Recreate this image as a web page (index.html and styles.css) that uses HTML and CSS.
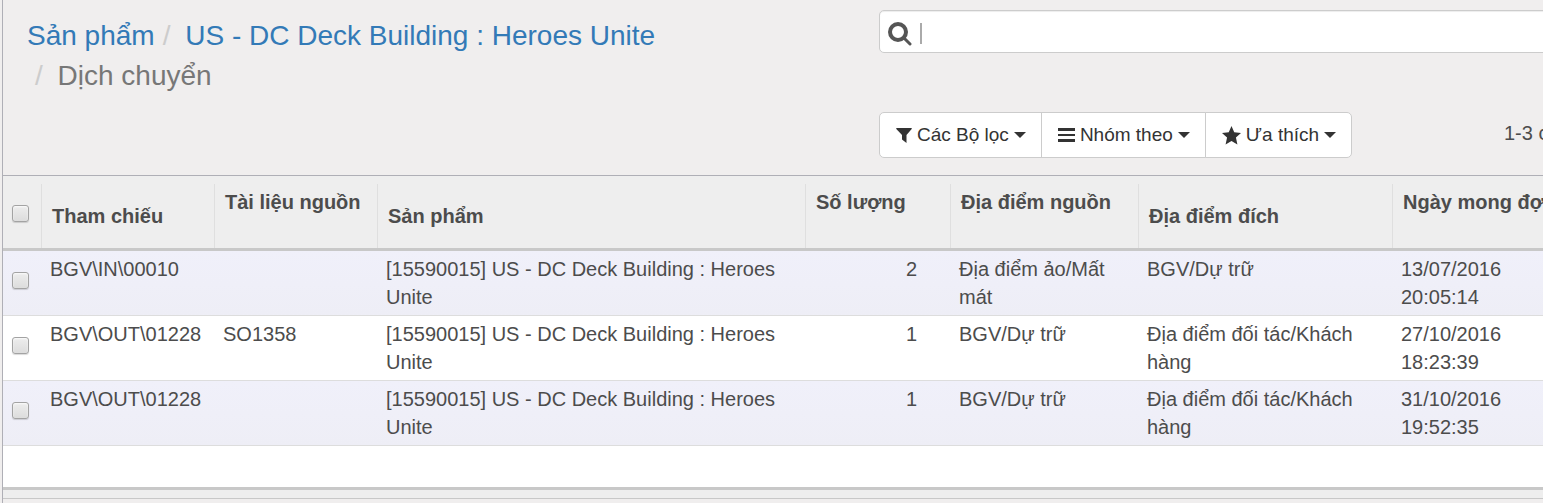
FILE: index.html
```html
<!DOCTYPE html>
<html lang="vi">
<head>
    <meta charset="UTF-8">
    <meta name="viewport" content="width=device-width, initial-scale=1.0">
    <title>Dịch chuyển</title>
    <link rel="stylesheet" href="styles.css">
</head>
<body>
<div class="main">
    <header class="control-panel">
        <ol class="breadcrumb">
            <li><a href="#">Sản phẩm</a></li>
            <li><a href="#">US - DC Deck Building : Heroes Unite</a></li>
            <li class="active">Dịch chuyển</li>
        </ol>
        <div class="search-side">
            <div class="searchview">
                <svg class="search-icon" viewBox="0 0 24 24" width="24" height="24"><circle cx="10" cy="10" r="8" fill="none" stroke="#555" stroke-width="4"/><path d="M16 16l6 6" stroke="#555" stroke-width="3" stroke-linecap="round"/></svg>
                <span class="cursor"></span>
                <input type="text" class="search-input" aria-label="Tìm kiếm">
            </div>
            <div class="toolbar">
                <div class="btn-group">
                    <button type="button" class="btn">
                        <svg viewBox="0 0 16 16" width="16" height="16"><path d="M.3 1h15.400v1L10.500 8v8L6 12.500V8L.3 2z" fill="#333"/></svg>
                        Các Bộ lọc
                        <span class="caret"></span>
                    </button>
                    <button type="button" class="btn">
                        <svg viewBox="0 0 17 16" width="17" height="16"><path d="M0 1h17v3H0zM0 7h17v2H0zM0 12h17v3H0z" fill="#333"/></svg>
                        Nhóm theo
                        <span class="caret"></span>
                    </button>
                    <button type="button" class="btn">
                        <svg viewBox="0 0 18 18" width="19" height="19"><path d="M9 0l2.600 6 6.400.6-4.800 4.300 1.400 6.600L9 14.200l-5.600 3.300 1.400-6.600L0 6.600 6.400 6z" fill="#333"/></svg>
                        Ưa thích
                        <span class="caret"></span>
                    </button>
                </div>
                <div class="pager">1-3 của 3</div>
            </div>
        </div>
    </header>

    <table class="list">
        <colgroup>
            <col class="col-check">
            <col class="col-ref">
            <col class="col-origin">
            <col class="col-product">
            <col class="col-qty">
            <col class="col-source">
            <col class="col-dest">
            <col class="col-date">
        </colgroup>
        <thead>
            <tr>
                <th class="check"><input type="checkbox" aria-label="Chọn tất cả"></th>
                <th><div class="sortable">Tham chiếu</div></th>
                <th><div>Tài liệu nguồn</div></th>
                <th><div class="sortable">Sản phẩm</div></th>
                <th><div>Số lượng</div></th>
                <th><div>Địa điểm nguồn</div></th>
                <th><div class="sortable">Địa điểm đích</div></th>
                <th><div>Ngày mong đợi</div></th>
            </tr>
        </thead>
        <tbody>
            <tr>
                <td class="check"><input type="checkbox" aria-label="BGV\IN\00010"></td>
                <td>BGV\IN\00010</td>
                <td></td>
                <td>[15590015] US - DC Deck Building : Heroes Unite</td>
                <td class="number">2</td>
                <td>Địa điểm ảo/Mất mát</td>
                <td>BGV/Dự trữ</td>
                <td>13/07/2016 20:05:14</td>
            </tr>
            <tr>
                <td class="check"><input type="checkbox" aria-label="BGV\OUT\01228"></td>
                <td>BGV\OUT\01228</td>
                <td>SO1358</td>
                <td>[15590015] US - DC Deck Building : Heroes Unite</td>
                <td class="number">1</td>
                <td>BGV/Dự trữ</td>
                <td>Địa điểm đối tác/Khách hàng</td>
                <td>27/10/2016 18:23:39</td>
            </tr>
            <tr>
                <td class="check"><input type="checkbox" aria-label="BGV\OUT\01228"></td>
                <td>BGV\OUT\01228</td>
                <td></td>
                <td>[15590015] US - DC Deck Building : Heroes Unite</td>
                <td class="number">1</td>
                <td>BGV/Dự trữ</td>
                <td>Địa điểm đối tác/Khách hàng</td>
                <td>31/10/2016 19:52:35</td>
            </tr>
        </tbody>
    </table>
    <div class="list-footer"></div>
</div>
</body>
</html>
```
FILE: styles.css
```css
* { box-sizing: border-box; }

body {
    margin: 0;
    font-family: Arial, "Liberation Sans", sans-serif;
    font-size: 20px;
    line-height: 28px;
    color: #4c4c4c;
    background-color: #f0eeee;
}

.main {
    margin-left: 2px;
    border-left: 1px solid #afafb6;
    min-height: 100vh;
    overflow: hidden;
}

/* Control panel */
.control-panel {
    display: flex;
    height: 176px;
    border-bottom: 1px solid #afafb6;
}

.breadcrumb {
    flex: 1;
    margin: 0;
    padding: 16px 40px 0 24px;
    list-style: none;
    font-size: 28px;
    line-height: 40px;
}

.breadcrumb li {
    float: left;
}

.breadcrumb li + li::before {
    content: "/\00a0";
    padding: 0 7px 0 8px;
    color: #ccc;
}

.breadcrumb a {
    color: #337ab7;
    text-decoration: none;
}

.breadcrumb .active { color: #777; }

.search-side {
    flex: 0 0 664px;
    padding-top: 10px;
}

.searchview {
    display: flex;
    align-items: center;
    height: 43px;
    margin-right: -20px;
    padding-left: 8px;
    border: 1px solid #ccc;
    border-radius: 5px;
    background-color: #fff;
    box-shadow: inset 0 1px 1px rgba(0, 0, 0, 0.075);
}

.search-icon { margin-top: 4px; }

.cursor {
    width: 2px;
    height: 21px;
    margin-top: 3px;
    margin-left: 8px;
    background-color: #aaa;
}

.search-input {
    flex: 1;
    border: none;
    outline: none;
    background: none;
    font: inherit;
}

.toolbar {
    display: flex;
    justify-content: space-between;
    margin-top: 59px;
}

.btn-group { display: flex; }

.btn {
    display: flex;
    align-items: center;
    gap: 5px;
    height: 46px;
    padding: 0 15px 0 16px;
    border: 1px solid #ccc;
    background-color: #fff;
    color: #333;
    font-family: inherit;
    font-size: 19px;
    white-space: nowrap;
}

.btn + .btn { margin-left: -1px; }
.btn:first-child { border-radius: 5px 0 0 5px; }
.btn:last-child { border-radius: 0 5px 5px 0; }

.caret {
    border-top: 6px solid #333;
    border-left: 6px solid transparent;
    border-right: 6px solid transparent;
}

.pager {
    width: 39px;
    padding-top: 7px;
    white-space: nowrap;
}

/* List */
.list {
    width: 100%;
    table-layout: fixed;
    border-collapse: separate;
    border-spacing: 0;
    background-color: #fff;
}

.col-check { width: 38px; }
.col-ref { width: 173px; }
.col-origin { width: 163px; }
.col-qty { width: 145px; }
.col-source { width: 188px; }
.col-dest { width: 254px; }
.col-date { width: 151px; }

th {
    height: 75px;
    padding: 8px 0 0;
    border-bottom: 3px solid #c8c8c8;
    background-color: #eee;
    text-align: left;
    vertical-align: top;
    white-space: nowrap;
}

th div {
    height: 64px;
    padding: 4px 0 0 10px;
    border-left: 1px solid #dfdfdf;
}

th .sortable { padding-top: 18px; }

td {
    height: 65px;
    padding: 4px 9px;
    border-bottom: 1px solid #ddd;
    vertical-align: top;
}

tbody tr:nth-child(odd) { background-image: linear-gradient(#f0f0fa, #eeeef6); }

td.number {
    padding-right: 33px;
    text-align: right;
}

td.check {
    padding: 0;
}

input[type="checkbox"] {
    appearance: none;
    display: block;
    width: 17px;
    height: 17px;
    margin: 21px 9px 0;
    border: 1px solid #a3a3a3;
    border-radius: 3px;
    background-image: linear-gradient(#ededed, #dcdcdc);
    box-shadow: 0 1px 1px rgba(0, 0, 0, 0.15), inset 0 1px 2px rgba(255, 255, 255, 0.75);
}

.list-footer {
    height: 53px;
    border-top: 41px solid #fff;
    border-bottom: 1px solid #c8c8c8;
    background: linear-gradient(#c8c8c8 3px, #eee 3px);
}
```
